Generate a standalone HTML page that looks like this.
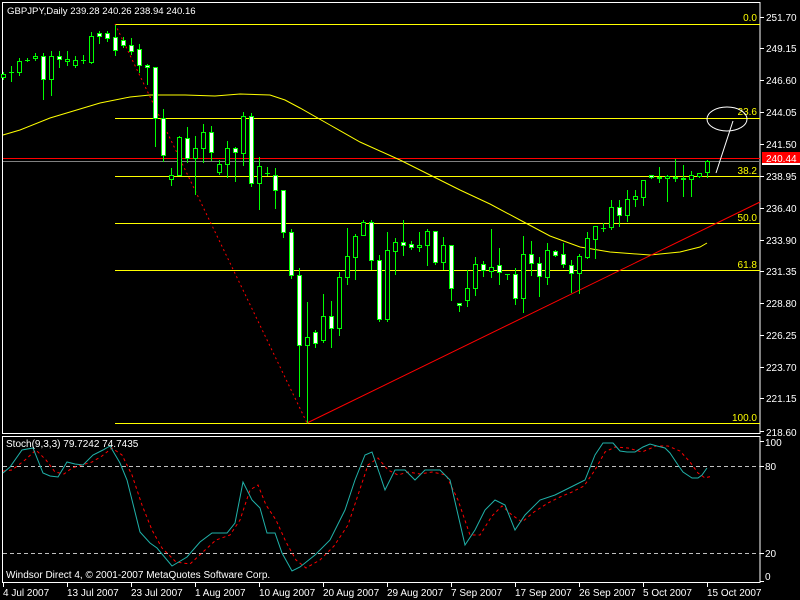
<!DOCTYPE html>
<html><head><meta charset="utf-8"><style>
html,body{margin:0;padding:0;background:#000;width:800px;height:600px;overflow:hidden}
svg{display:block}
text{font-family:"Liberation Sans",sans-serif;font-size:10px}
</style></head><body>
<svg width="800" height="600" viewBox="0 0 800 600" xmlns="http://www.w3.org/2000/svg" shape-rendering="crispEdges">
<rect width="800" height="600" fill="#000"/>
<rect x="2.5" y="2.5" width="757.5" height="431" fill="none" stroke="#fff"/>
<rect x="2.5" y="436.5" width="757.5" height="146" fill="none" stroke="#fff"/>
<g stroke="#ffff00">
<line x1="115" y1="24.5" x2="760" y2="24.5"/>
<line x1="115" y1="118.5" x2="760" y2="118.5"/>
<line x1="115" y1="176.5" x2="760" y2="176.5"/>
<line x1="115" y1="223.5" x2="760" y2="223.5"/>
<line x1="115" y1="270.5" x2="760" y2="270.5"/>
<line x1="115" y1="423.5" x2="760" y2="423.5"/>
</g>
<g fill="#ffff00" text-anchor="end">
<text x="757" y="21">0.0</text>
<text x="757" y="115">23.6</text>
<text x="757" y="174">38.2</text>
<text x="757" y="221">50.0</text>
<text x="757" y="268">61.8</text>
<text x="757" y="421">100.0</text>
</g>
<line x1="3" y1="158.5" x2="760" y2="158.5" stroke="#ff0000"/>
<line x1="3" y1="161.5" x2="760" y2="161.5" stroke="#808080"/>
<polyline fill="none" stroke="#ffff00" shape-rendering="auto" points="3,135 20,130 50,118 100,103 130,97 150,95 185,95 215,96 240,94 270,95 285,100 300,108 330,125 360,142 400,160 430,175 460,190 490,204 520,220 550,236 580,247 610,252 650,255 680,252 700,247 707,243"/>
<line x1="115" y1="24" x2="307" y2="423" stroke="#ff0000" stroke-dasharray="2,3" shape-rendering="auto"/>
<line x1="307" y1="423" x2="760" y2="202" stroke="#ff0000" shape-rendering="auto"/>
<g stroke="#00ff00">
<line x1="3.5" y1="72" x2="3.5" y2="80"/><rect x="1.5" y="74.5" width="4" height="3" fill="#000"/>
<line x1="11.5" y1="66" x2="11.5" y2="82"/><line x1="9" y1="72.5" x2="14" y2="72.5"/>
<line x1="19.5" y1="58" x2="19.5" y2="76"/><rect x="17.5" y="61.5" width="4" height="11" fill="#000"/>
<line x1="27.5" y1="58" x2="27.5" y2="62"/><line x1="25" y1="60.5" x2="30" y2="60.5"/>
<line x1="35.5" y1="53" x2="35.5" y2="61"/><rect x="33.5" y="56.5" width="4" height="2" fill="#000"/>
<line x1="43.5" y1="53" x2="43.5" y2="100"/><rect x="41.5" y="56.5" width="4" height="23" fill="#fff"/>
<line x1="51.5" y1="51" x2="51.5" y2="96"/><rect x="49.5" y="56.5" width="4" height="23" fill="#000"/>
<line x1="59.5" y1="51" x2="59.5" y2="68"/><rect x="57.5" y="56.5" width="4" height="3" fill="#fff"/>
<line x1="67.5" y1="51" x2="67.5" y2="66"/><rect x="65.5" y="59.5" width="4" height="2" fill="#000"/>
<line x1="75.5" y1="56" x2="75.5" y2="68"/><rect x="73.5" y="60.5" width="4" height="5" fill="#000"/>
<line x1="83.5" y1="55" x2="83.5" y2="64"/><line x1="81" y1="60.5" x2="86" y2="60.5"/>
<line x1="91.5" y1="32" x2="91.5" y2="64"/><rect x="89.5" y="36.5" width="4" height="26" fill="#000"/>
<line x1="99.5" y1="31" x2="99.5" y2="44"/><rect x="97.5" y="33.5" width="4" height="3" fill="#fff"/>
<line x1="107.5" y1="31" x2="107.5" y2="42"/><rect x="105.5" y="33.5" width="4" height="5" fill="#fff"/>
<line x1="115.5" y1="25" x2="115.5" y2="56"/><rect x="113.5" y="37.5" width="4" height="13" fill="#fff"/>
<line x1="123.5" y1="37" x2="123.5" y2="48"/><rect x="121.5" y="40.5" width="4" height="5" fill="#fff"/>
<line x1="131.5" y1="38" x2="131.5" y2="55"/><rect x="129.5" y="45.5" width="4" height="6" fill="#fff"/>
<line x1="139.5" y1="44" x2="139.5" y2="73"/><rect x="137.5" y="49.5" width="4" height="16" fill="#fff"/>
<line x1="147.5" y1="64" x2="147.5" y2="85"/><rect x="145.5" y="65.5" width="4" height="2" fill="#fff"/>
<line x1="155.5" y1="67" x2="155.5" y2="147"/><rect x="153.5" y="67.5" width="4" height="51" fill="#fff"/>
<line x1="163.5" y1="109" x2="163.5" y2="162"/><rect x="161.5" y="118.5" width="4" height="37" fill="#fff"/>
<line x1="171.5" y1="168" x2="171.5" y2="186"/><rect x="169.5" y="175.5" width="4" height="4" fill="#000"/>
<line x1="179.5" y1="136" x2="179.5" y2="176"/><rect x="177.5" y="137.5" width="4" height="38" fill="#000"/>
<line x1="187.5" y1="127" x2="187.5" y2="163"/><rect x="185.5" y="138.5" width="4" height="20" fill="#fff"/>
<line x1="195.5" y1="136" x2="195.5" y2="195"/><rect x="193.5" y="148.5" width="4" height="10" fill="#000"/>
<line x1="203.5" y1="124" x2="203.5" y2="163"/><rect x="201.5" y="132.5" width="4" height="16" fill="#000"/>
<line x1="211.5" y1="126" x2="211.5" y2="161"/><rect x="209.5" y="132.5" width="4" height="20" fill="#fff"/>
<line x1="219.5" y1="160" x2="219.5" y2="175"/><rect x="217.5" y="164.5" width="4" height="8" fill="#000"/>
<line x1="227.5" y1="141" x2="227.5" y2="178"/><rect x="225.5" y="148.5" width="4" height="16" fill="#000"/>
<line x1="235.5" y1="147" x2="235.5" y2="182"/><rect x="233.5" y="148.5" width="4" height="4" fill="#fff"/>
<line x1="243.5" y1="112" x2="243.5" y2="166"/><rect x="241.5" y="116.5" width="4" height="37" fill="#000"/>
<line x1="251.5" y1="113" x2="251.5" y2="187"/><rect x="249.5" y="116.5" width="4" height="67" fill="#fff"/>
<line x1="259.5" y1="157" x2="259.5" y2="210"/><rect x="257.5" y="166.5" width="4" height="17" fill="#000"/>
<line x1="267.5" y1="167" x2="267.5" y2="176"/><line x1="265" y1="173.5" x2="270" y2="173.5"/>
<line x1="275.5" y1="168" x2="275.5" y2="209"/><rect x="273.5" y="175.5" width="4" height="15" fill="#fff"/>
<line x1="283.5" y1="190" x2="283.5" y2="238"/><rect x="281.5" y="190.5" width="4" height="42" fill="#fff"/>
<line x1="291.5" y1="229" x2="291.5" y2="279"/><rect x="289.5" y="232.5" width="4" height="43" fill="#fff"/>
<line x1="299.5" y1="268" x2="299.5" y2="397"/><rect x="297.5" y="275.5" width="4" height="70" fill="#fff"/>
<line x1="307.5" y1="302" x2="307.5" y2="423"/><rect x="305.5" y="337.5" width="4" height="8" fill="#000"/>
<line x1="315.5" y1="330" x2="315.5" y2="348"/><rect x="313.5" y="332.5" width="4" height="11" fill="#fff"/>
<line x1="323.5" y1="294" x2="323.5" y2="343"/><rect x="321.5" y="316.5" width="4" height="24" fill="#000"/>
<line x1="331.5" y1="301" x2="331.5" y2="348"/><rect x="329.5" y="316.5" width="4" height="12" fill="#fff"/>
<line x1="339.5" y1="272" x2="339.5" y2="336"/><rect x="337.5" y="277.5" width="4" height="51" fill="#000"/>
<line x1="347.5" y1="228" x2="347.5" y2="285"/><rect x="345.5" y="256.5" width="4" height="21" fill="#000"/>
<line x1="355.5" y1="234" x2="355.5" y2="280"/><rect x="353.5" y="236.5" width="4" height="21" fill="#000"/>
<line x1="363.5" y1="220" x2="363.5" y2="236"/><rect x="361.5" y="222.5" width="4" height="13" fill="#000"/>
<line x1="371.5" y1="220" x2="371.5" y2="270"/><rect x="369.5" y="222.5" width="4" height="38" fill="#fff"/>
<line x1="379.5" y1="255" x2="379.5" y2="322"/><rect x="377.5" y="260.5" width="4" height="59" fill="#fff"/>
<line x1="387.5" y1="232" x2="387.5" y2="322"/><rect x="385.5" y="250.5" width="4" height="69" fill="#000"/>
<line x1="395.5" y1="238" x2="395.5" y2="275"/><rect x="393.5" y="242.5" width="4" height="9" fill="#000"/>
<line x1="403.5" y1="220" x2="403.5" y2="256"/><rect x="401.5" y="242.5" width="4" height="3" fill="#fff"/>
<line x1="411.5" y1="241" x2="411.5" y2="250"/><rect x="409.5" y="244.5" width="4" height="3" fill="#fff"/>
<line x1="419.5" y1="232" x2="419.5" y2="252"/><rect x="417.5" y="245.5" width="4" height="2" fill="#000"/>
<line x1="427.5" y1="229" x2="427.5" y2="266"/><rect x="425.5" y="231.5" width="4" height="14" fill="#000"/>
<line x1="435.5" y1="231" x2="435.5" y2="265"/><rect x="433.5" y="231.5" width="4" height="31" fill="#fff"/>
<line x1="443.5" y1="237" x2="443.5" y2="270"/><rect x="441.5" y="245.5" width="4" height="17" fill="#000"/>
<line x1="451.5" y1="245" x2="451.5" y2="301"/><rect x="449.5" y="245.5" width="4" height="43" fill="#fff"/>
<line x1="459.5" y1="303" x2="459.5" y2="312"/><rect x="457.5" y="303.5" width="4" height="2" fill="#fff"/>
<line x1="467.5" y1="270" x2="467.5" y2="307"/><rect x="465.5" y="288.5" width="4" height="12" fill="#000"/>
<line x1="475.5" y1="257" x2="475.5" y2="296"/><rect x="473.5" y="264.5" width="4" height="24" fill="#000"/>
<line x1="483.5" y1="261" x2="483.5" y2="277"/><rect x="481.5" y="264.5" width="4" height="6" fill="#fff"/>
<line x1="491.5" y1="229" x2="491.5" y2="278"/><rect x="489.5" y="267.5" width="4" height="4" fill="#000"/>
<line x1="499.5" y1="248" x2="499.5" y2="285"/><rect x="497.5" y="265.5" width="4" height="7" fill="#fff"/>
<line x1="507.5" y1="274" x2="507.5" y2="280"/><line x1="505" y1="274.5" x2="510" y2="274.5"/>
<line x1="515.5" y1="268" x2="515.5" y2="305"/><rect x="513.5" y="274.5" width="4" height="24" fill="#fff"/>
<line x1="523.5" y1="236" x2="523.5" y2="313"/><rect x="521.5" y="254.5" width="4" height="44" fill="#000"/>
<line x1="531.5" y1="241" x2="531.5" y2="276"/><rect x="529.5" y="254.5" width="4" height="9" fill="#fff"/>
<line x1="539.5" y1="257" x2="539.5" y2="297"/><rect x="537.5" y="263.5" width="4" height="13" fill="#fff"/>
<line x1="547.5" y1="243" x2="547.5" y2="285"/><rect x="545.5" y="250.5" width="4" height="27" fill="#000"/>
<line x1="555.5" y1="250" x2="555.5" y2="257"/><rect x="553.5" y="251.5" width="4" height="4" fill="#fff"/>
<line x1="563.5" y1="243" x2="563.5" y2="268"/><rect x="561.5" y="254.5" width="4" height="10" fill="#fff"/>
<line x1="571.5" y1="260" x2="571.5" y2="293"/><rect x="569.5" y="265.5" width="4" height="8" fill="#fff"/>
<line x1="579.5" y1="254" x2="579.5" y2="294"/><rect x="577.5" y="256.5" width="4" height="17" fill="#000"/>
<line x1="587.5" y1="232" x2="587.5" y2="259"/><rect x="585.5" y="238.5" width="4" height="19" fill="#000"/>
<line x1="595.5" y1="226" x2="595.5" y2="259"/><rect x="593.5" y="226.5" width="4" height="13" fill="#000"/>
<line x1="603.5" y1="223" x2="603.5" y2="232"/><line x1="601" y1="228.5" x2="606" y2="228.5"/>
<line x1="611.5" y1="200" x2="611.5" y2="230"/><rect x="609.5" y="207.5" width="4" height="20" fill="#000"/>
<line x1="619.5" y1="200" x2="619.5" y2="227"/><rect x="617.5" y="207.5" width="4" height="8" fill="#fff"/>
<line x1="627.5" y1="190" x2="627.5" y2="222"/><rect x="625.5" y="199.5" width="4" height="16" fill="#000"/>
<line x1="635.5" y1="190" x2="635.5" y2="207"/><rect x="633.5" y="196.5" width="4" height="3" fill="#000"/>
<line x1="643.5" y1="180" x2="643.5" y2="206"/><rect x="641.5" y="180.5" width="4" height="17" fill="#000"/>
<line x1="651.5" y1="175" x2="651.5" y2="179"/><rect x="649.5" y="175.5" width="4" height="2" fill="#fff"/>
<line x1="659.5" y1="167" x2="659.5" y2="183"/><rect x="657.5" y="177.5" width="4" height="1" fill="#000"/>
<line x1="667.5" y1="175" x2="667.5" y2="202"/><rect x="665.5" y="176.5" width="4" height="2" fill="#000"/>
<line x1="675.5" y1="159" x2="675.5" y2="182"/><rect x="673.5" y="177.5" width="4" height="1" fill="#000"/>
<line x1="683.5" y1="165" x2="683.5" y2="197"/><rect x="681.5" y="178.5" width="4" height="1" fill="#000"/>
<line x1="691.5" y1="171" x2="691.5" y2="197"/><rect x="689.5" y="175.5" width="4" height="4" fill="#000"/>
<line x1="699.5" y1="173" x2="699.5" y2="178"/><rect x="697.5" y="173.5" width="4" height="3" fill="#000"/>
<line x1="707.5" y1="160" x2="707.5" y2="178"/><rect x="705.5" y="161.5" width="4" height="11" fill="#000"/>
</g>
<ellipse cx="727" cy="119" rx="20" ry="12" fill="none" stroke="#fff" shape-rendering="auto"/>
<line x1="733" y1="121" x2="716" y2="173" stroke="#fff" shape-rendering="auto"/>
<g stroke="#fff">
<line x1="760" y1="17.5" x2="764" y2="17.5"/><line x1="760" y1="48.5" x2="764" y2="48.5"/><line x1="760" y1="80.5" x2="764" y2="80.5"/><line x1="760" y1="112.5" x2="764" y2="112.5"/><line x1="760" y1="144.5" x2="764" y2="144.5"/><line x1="760" y1="176.5" x2="764" y2="176.5"/><line x1="760" y1="208.5" x2="764" y2="208.5"/><line x1="760" y1="240.5" x2="764" y2="240.5"/><line x1="760" y1="271.5" x2="764" y2="271.5"/><line x1="760" y1="303.5" x2="764" y2="303.5"/><line x1="760" y1="335.5" x2="764" y2="335.5"/><line x1="760" y1="367.5" x2="764" y2="367.5"/><line x1="760" y1="398.5" x2="764" y2="398.5"/><line x1="760" y1="431.5" x2="764" y2="431.5"/>
<line x1="760" y1="441.5" x2="764" y2="441.5"/><line x1="760" y1="466.5" x2="764" y2="466.5"/><line x1="760" y1="553.5" x2="764" y2="553.5"/><line x1="760" y1="581.5" x2="764" y2="581.5"/>
</g>
<g fill="#fff">
<text x="766" y="21">251.70</text><text x="766" y="52">249.15</text><text x="766" y="84">246.60</text><text x="766" y="116">244.05</text><text x="766" y="148">241.50</text><text x="766" y="180">238.95</text><text x="766" y="212">236.40</text><text x="766" y="244">233.90</text><text x="766" y="275">231.35</text><text x="766" y="307">228.80</text><text x="766" y="339">226.25</text><text x="766" y="371">223.70</text><text x="766" y="402">221.15</text><text x="766" y="436">218.60</text>
<text x="765" y="446">100</text><text x="765" y="470">80</text><text x="765" y="557">20</text><text x="765" y="580">0</text>
</g>
<rect x="762" y="152" width="38" height="11" fill="#ff0000"/>
<rect x="762" y="163" width="38" height="2" fill="#fff"/>
<text x="766" y="162" fill="#fff">240.44</text>
<text x="7" y="14" fill="#fff" style="font-size:9.6px">GBPJPY,Daily  239.28 240.26 238.94 240.16</text>
<g stroke="#c0c0c0" stroke-dasharray="4,3">
<line x1="3" y1="466.5" x2="760" y2="466.5"/>
<line x1="3" y1="553.5" x2="760" y2="553.5"/>
</g>
<polyline fill="none" stroke="#ff0000" stroke-dasharray="3,3" shape-rendering="auto" points="3,471 12,470 25,460 36,450 46,460 55,472 64,474 72,468 82,465 92,462 102,456 112,448 122,455 132,475 142,505 152,530 162,548 176,562 190,564 204,551 216,540 230,535 240,520 250,490 258,485 266,505 276,520 286,542 296,560 306,568 320,560 334,546 348,525 358,495 368,465 378,458 388,470 398,475 408,472 420,474 432,472 446,475 458,500 470,535 480,535 492,516 502,506 512,515 522,522 534,512 548,503 560,497 572,492 584,486 595,470 605,452 615,447 628,448 642,452 656,446 668,446 680,451 690,462 698,473 705,478 712,476"/>
<polyline fill="none" stroke="#20b2aa" shape-rendering="auto" points="3,473 10,467 22,450 33,448 43,473 50,476 58,477 67,462 75,464 83,465 93,455 103,450 110,446 120,463 127,480 140,532 150,543 157,548 172,566 187,557 200,542 212,533 227,533 235,523 243,482 252,500 260,508 267,533 275,533 282,553 292,571 300,567 315,555 330,540 345,510 355,480 365,455 372,452 380,475 385,490 395,470 405,470 415,480 425,470 440,470 450,480 465,545 475,530 485,510 495,500 505,505 515,530 525,515 540,500 555,495 565,490 575,485 585,480 595,455 603,443 613,443 620,451 627,452 635,452 643,447 650,444 657,446 665,448 670,453 678,465 683,472 692,478 698,478 702,475 707,468"/>
<text x="6" y="447" fill="#fff">Stoch(9,3,3) 79.7242 74.7435</text>
<text x="6" y="578" fill="#fff">Windsor Direct 4, © 2001-2007 MetaQuotes Software Corp.</text>
<g stroke="#fff">
<line x1="3.5" y1="582" x2="3.5" y2="587"/><line x1="67.5" y1="582" x2="67.5" y2="587"/><line x1="131.5" y1="582" x2="131.5" y2="587"/><line x1="195.5" y1="582" x2="195.5" y2="587"/><line x1="259.5" y1="582" x2="259.5" y2="587"/><line x1="323.5" y1="582" x2="323.5" y2="587"/><line x1="387.5" y1="582" x2="387.5" y2="587"/><line x1="451.5" y1="582" x2="451.5" y2="587"/><line x1="515.5" y1="582" x2="515.5" y2="587"/><line x1="579.5" y1="582" x2="579.5" y2="587"/><line x1="643.5" y1="582" x2="643.5" y2="587"/><line x1="707.5" y1="582" x2="707.5" y2="587"/>
</g>
<g fill="#fff">
<text x="3" y="596">4 Jul 2007</text><text x="67" y="596">13 Jul 2007</text><text x="131" y="596">23 Jul 2007</text><text x="195" y="596">1 Aug 2007</text><text x="259" y="596">10 Aug 2007</text><text x="323" y="596">20 Aug 2007</text><text x="387" y="596">29 Aug 2007</text><text x="451" y="596">7 Sep 2007</text><text x="515" y="596">17 Sep 2007</text><text x="579" y="596">26 Sep 2007</text><text x="643" y="596">5 Oct 2007</text><text x="707" y="596">15 Oct 2007</text>
</g>
</svg>
</body></html>
